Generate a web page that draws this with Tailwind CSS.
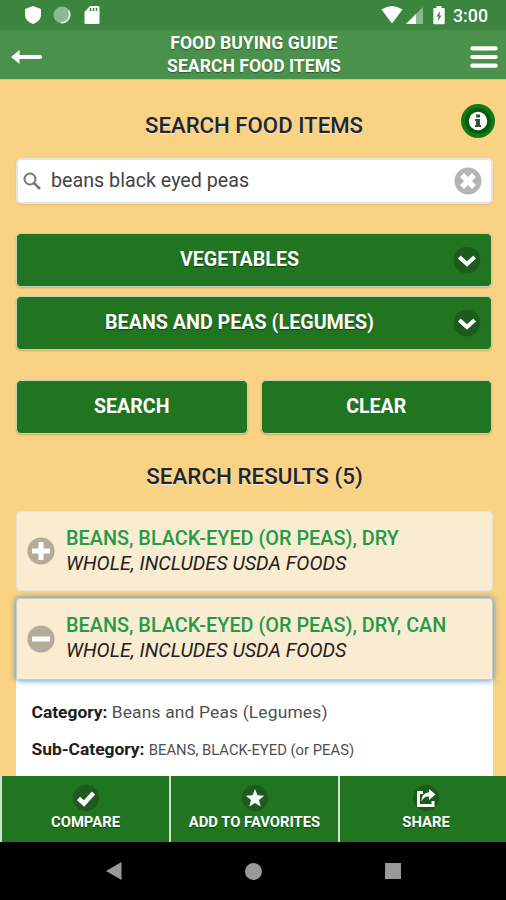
<!DOCTYPE html>
<html lang="en">
<head>
<meta charset="utf-8">
<title>Food Buying Guide</title>
<script src="https://cdn.jsdelivr.net/npm/@tailwindcss/browser@4"></script>
</head>
<body class="flex h-[900px] w-[506px] flex-col overflow-hidden bg-[#fad283] font-['Roboto',sans-serif] whitespace-nowrap text-[#20262c]">
<div class="flex h-[30px] shrink-0 items-center bg-[#3c853e] text-white">
  <svg class="ml-[24px] h-[20px] w-[18px]" viewBox="0 0 18 20" fill="#fff"><path d="M9 1l8 3v6c0 4-3.500 7.500-8 9-4.500-1.500-8-5-8-9V4z"/></svg>
  <svg class="ml-[11px] h-[20px] w-[20px]" viewBox="0 0 20 20"><circle cx="9" cy="10" r="8.500" fill="#8abb8b"/><path d="M15.500 5.500a8 8 0 0 1-7.500 12" fill="none" stroke="#d7ead7" stroke-width="1.800"/></svg>
  <svg class="ml-[11px] h-[20px] w-[16px]" viewBox="0 0 16 20"><path d="M6 1h8q1.500 0 1.500 1.500v15q0 1.500-1.500 1.500H2Q.500 19 .500 17.500V7z" fill="#fff"/><path d="M6.500 3v3M9.500 3v3M12.500 3v3" stroke="#3c853e" stroke-width="1.500"/></svg>
  <svg class="ml-[280px] h-[20px] w-[24px]" viewBox="0 0 24 20"><path d="M1.500 4.500Q12-2.500 22.500 4.500L12 18.500z" fill="#fff"/></svg>
  <svg class="ml-[2px] h-[20px] w-[18px]" viewBox="0 0 18 20"><path d="M0 19L17 2v17z" fill="#8abb8b"/><path d="M0 19L10 9v10z" fill="#fff"/></svg>
  <svg class="ml-[9px] h-[20px] w-[12px]" viewBox="0 0 12 20"><path d="M3.500 1h5v2H11q.700 0 .700.700V18.500q0 .700-.700.700H1q-.700 0-.700-.700V3.700Q.300 3 1 3h2.500z" fill="#fff"/><path d="M7 6L3.500 11.500h2L5 16l3.500-5.500h-2z" fill="#3c853e"/></svg>
  <span class="mt-[2px] ml-[8px] text-[17.800px] font-medium">3:00</span>
</div>
<header class="flex h-[50px] shrink-0 items-center justify-between border-b border-[#b9c98b] bg-[#4a924b] pr-[8px] pl-[11px] text-white">
  <svg class="mt-[5px] h-[16px] w-[32px]" viewBox="0 0 32 16"><path d="M0 8L8.500 1v5H29q2 0 2 2t-2 2H8.500v5z" fill="#fff"/></svg>
  <div class="mt-[1px] w-[260px] pr-[5px] text-center text-[17.6px] leading-[23px] font-bold [text-shadow:0_1px_1px_#2a5a2b]"><div>FOOD BUYING GUIDE</div><div>SEARCH FOOD ITEMS</div></div>
  <svg class="mt-[5px] h-[26px] w-[28px]" viewBox="0 0 28 26"><path d="M2.300 4.300h23.400M2.300 13h23.400M2.300 21.700h23.400" stroke="#fff" stroke-width="4.200" stroke-linecap="round"/></svg>
</header>
<main class="flex h-[696px] shrink-0 flex-col overflow-hidden pr-[13px] pl-[16px]">
  <div class="mt-[23px] flex h-[36px] items-center justify-between">
    <span class="w-[32px]"></span>
    <h1 class="mt-[7px] text-[22.2px] leading-[26px] font-medium [text-shadow:0_1px_0_#f3eee8]">SEARCH FOOD ITEMS</h1>
    <svg class="-mr-[3px] h-[36px] w-[36px]" viewBox="0 0 36 36"><circle cx="18" cy="18" r="17" fill="#107914"/><circle cx="18" cy="18" r="13" fill="#075a0c"/><circle cx="18" cy="18" r="9.200" fill="#fff"/><path d="M16 11.500h4v3h-4zM15 16h5v6h1v2h-6v-2h1v-4h-1z" fill="#315535"/></svg>
  </div>
  <div class="mt-[19px] flex h-[46px] items-center rounded-[5px] border-2 border-[#e9e4da] bg-white pr-[9px] pl-[5px] shadow-[0_1px_2px_#0000001a]">
    <svg class="h-[18px] w-[18px]" viewBox="0 0 18 18" fill="none" stroke="#777" stroke-width="2"><circle cx="7" cy="7" r="5.500"/><path d="M11 11l6 6" stroke-width="2.500"/></svg>
    <span class="ml-[10px] text-[19.700px] text-[#444]">beans black eyed peas</span>
    <svg class="ml-auto h-[28px] w-[28px]" viewBox="0 0 28 28"><circle cx="14" cy="14" r="13.500" fill="#b5b5b5"/><path d="M8 8l12 12M20 8L8 20" stroke="#fff" stroke-width="5.500"/></svg>
  </div>
  <div class="mt-[29px] mr-px flex h-[54px] items-center rounded-[5px] border border-[#c3d5b4] bg-[#217521] pr-[10px] text-[19.650px] font-bold text-white shadow-[0_1px_2px_#00000030] [text-shadow:0_1px_1px_#0b3e0b]">
    <span class="flex-1 pl-[9px] text-center">VEGETABLES</span>
    <svg class="h-[28px] w-[28px]" viewBox="0 0 28 28"><circle cx="14" cy="14" r="13.300" fill="#1d5b1d"/><path d="M6.300 11L14 18l7.700-7" fill="none" stroke="#fff" stroke-width="4"/></svg>
  </div>
  <div class="mt-[9px] mr-px flex h-[54px] items-center rounded-[5px] border border-[#c3d5b4] bg-[#217521] pr-[10px] text-[19.700px] font-bold text-white shadow-[0_1px_2px_#00000030] [text-shadow:0_1px_1px_#0b3e0b]">
    <span class="flex-1 pl-[9px] text-center">BEANS AND PEAS (LEGUMES)</span>
    <svg class="h-[28px] w-[28px]" viewBox="0 0 28 28"><circle cx="14" cy="14" r="13.300" fill="#1d5b1d"/><path d="M6.300 11L14 18l7.700-7" fill="none" stroke="#fff" stroke-width="4"/></svg>
  </div>
  <div class="mt-[30px] mr-px flex h-[54px] gap-[13px] text-[19.600px] font-bold text-white [text-shadow:0_1px_1px_#0b3e0b]">
    <button class="flex-1 rounded-[5px] border border-[#c3d5b4] bg-[#217521] shadow-[0_1px_2px_#00000030]">SEARCH</button>
    <button class="flex-1 rounded-[5px] border border-[#c3d5b4] bg-[#217521] shadow-[0_1px_2px_#00000030]">CLEAR</button>
  </div>
  <h2 class="mt-[29px] text-center text-[22.400px] leading-[26px] font-medium [text-shadow:0_1px_0_#f3eee8]">SEARCH RESULTS (5)</h2>
  <section class="mt-[22px] flex h-[80px] shrink-0 items-center rounded-[4px] border border-[#eadfca] bg-[#faecd1] pl-[10px]">
    <svg class="h-[28px] w-[28px]" viewBox="0 0 28 28"><circle cx="14" cy="14" r="13.600" fill="#b5ab98"/><path d="M14 5v18M5 14h18" stroke="#fff" stroke-width="5"/></svg>
    <div class="-mt-[1px] ml-[11px] text-[19.700px] leading-[25px]"><div class="text-[19.850px] font-medium text-[#249a48]">BEANS, BLACK-EYED (OR PEAS), DRY</div><div class="italic text-[#222]">WHOLE, INCLUDES USDA FOODS</div></div>
  </section>
  <section class="relative mt-[7px] flex h-[82px] shrink-0 items-center rounded-t-[4px] border border-[#c5d0cc] bg-[#faecd1] pl-[10px] shadow-[0_0_6px_#3388cc]">
    <svg class="h-[28px] w-[28px]" viewBox="0 0 28 28"><circle cx="14" cy="14" r="13.600" fill="#b5ab98"/><path d="M5 14h18" stroke="#fff" stroke-width="5"/></svg>
    <div class="-mt-[2px] ml-[11px] text-[19.700px] leading-[25px]"><div class="text-[19.850px] font-medium text-[#249a48]">BEANS, BLACK-EYED (OR PEAS), DRY, CAN</div><div class="italic text-[#222]">WHOLE, INCLUDES USDA FOODS</div></div>
  </section>
  <div class="flex-1 bg-white pt-[20px] pl-[15.500px] text-[17.400px] leading-[25px] text-[#505050]">
    <p><b class="font-bold text-[#202020]">Category:</b> <span class="tracking-[0.170px]">Beans and Peas (Legumes)</span></p>
    <p class="mt-[12px]"><b class="font-bold text-[#202020]">Sub-Category:</b> <span class="text-[14.800px]">BEANS, BLACK-EYED (or PEAS)</span></p>
  </div>
</main>
<nav class="grid h-[66px] shrink-0 grid-cols-[167px_167px_166px] gap-x-[2px] bg-[#d2dfcb] pl-[2px] text-[14.800px] leading-[18px] font-bold text-white [text-shadow:0_1px_1px_#0b3e0b]">
  <div class="flex flex-col items-center bg-[#217521] pt-[9px]"><svg class="h-[27px] w-[28px]" viewBox="0 0 28 27"><circle cx="14" cy="13" r="13.200" fill="#1d5b1d"/><path d="M6.500 13.500l5.500 5L21.500 8" fill="none" stroke="#fff" stroke-width="4.500"/></svg><span class="mt-[1px]">COMPARE</span></div>
  <div class="flex flex-col items-center bg-[#217521] pt-[9px]"><svg class="h-[27px] w-[28px]" viewBox="0 0 28 27"><circle cx="14" cy="13" r="13.200" fill="#1d5b1d"/><path d="M14 4l2.500 6.200 6.700.500-5.200 4.200 1.700 6.600L14 17.900l-5.700 3.600L10 14.900l-5.200-4.200 6.700-.500z" fill="#fff"/></svg><span class="mt-[1px]">ADD TO FAVORITES</span></div>
  <div class="flex flex-col items-center bg-[#217521] pl-[6px] pt-[9px]"><svg class="h-[27px] w-[28px]" viewBox="0 0 28 27"><circle cx="14" cy="13" r="13.200" fill="#1d5b1d"/><path d="M11 7.500H6.500v13h14.500V16" fill="none" stroke="#fff" stroke-width="3"/><path d="M9.500 16.500C9.500 10 13 7.500 17 7.500V4l6.500 5.500L17 15v-3.500c-3.500 0-5.500 1-7.500 5z" fill="#fff"/></svg><span class="mt-[1px]">SHARE</span></div>
</nav>
<div class="flex h-[58px] shrink-0 items-center bg-black">
  <svg class="ml-[105px] h-[20px] w-[18px]" viewBox="0 0 18 20"><path d="M1 10L16.500 1v18z" fill="#999"/></svg>
  <div class="ml-[122px] h-[17px] w-[17px] rounded-full bg-[#999]"></div>
  <div class="ml-[123px] h-[16px] w-[16px] bg-[#999]"></div>
</div>
</body>
</html>
